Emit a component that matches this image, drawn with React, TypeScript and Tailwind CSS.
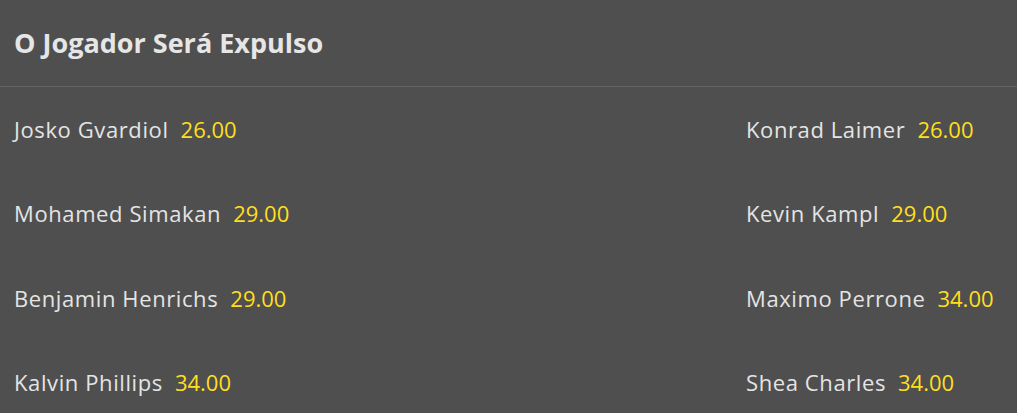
const ROWS = [
  [
    { name: "Josko Gvardiol", odds: "26.00" },
    { name: "Konrad Laimer", odds: "26.00" },
  ],
  [
    { name: "Mohamed Simakan", odds: "29.00" },
    { name: "Kevin Kampl", odds: "29.00" },
  ],
  [
    { name: "Benjamin Henrichs", odds: "29.00" },
    { name: "Maximo Perrone", odds: "34.00" },
  ],
  [
    { name: "Kalvin Phillips", odds: "34.00" },
    { name: "Shea Charles", odds: "34.00" },
  ],
];

export default function App() {
  return (
    <div
      className="h-[413px] w-[1017px] overflow-hidden bg-[#4f4f4f]"
      style={{ fontFamily: '"Open Sans", "Noto Sans", sans-serif' }}
    >
      {/* Market header */}
      <div className="flex h-[87px] items-center border-b border-[#656565] px-[14px]">
        <h2 className="text-[27px] font-bold text-[#e6e6e6]">O Jogador Será Expulso</h2>
      </div>

      {/* Selections */}
      <div className="flex flex-col">
        {ROWS.map((row, i) => (
          <div key={i} className="grid h-[84.5px] grid-cols-[732px_1fr] items-center pl-[14px]">
            {row.map(({ name, odds }) => (
              <div key={name} className="flex items-center gap-[12px] text-[22px]">
                <span className="tracking-[0.6px] text-[#e4e4e4]">{name}</span>
                <span className="text-[#ffdf1b]">{odds}</span>
              </div>
            ))}
          </div>
        ))}
      </div>
    </div>
  );
}
